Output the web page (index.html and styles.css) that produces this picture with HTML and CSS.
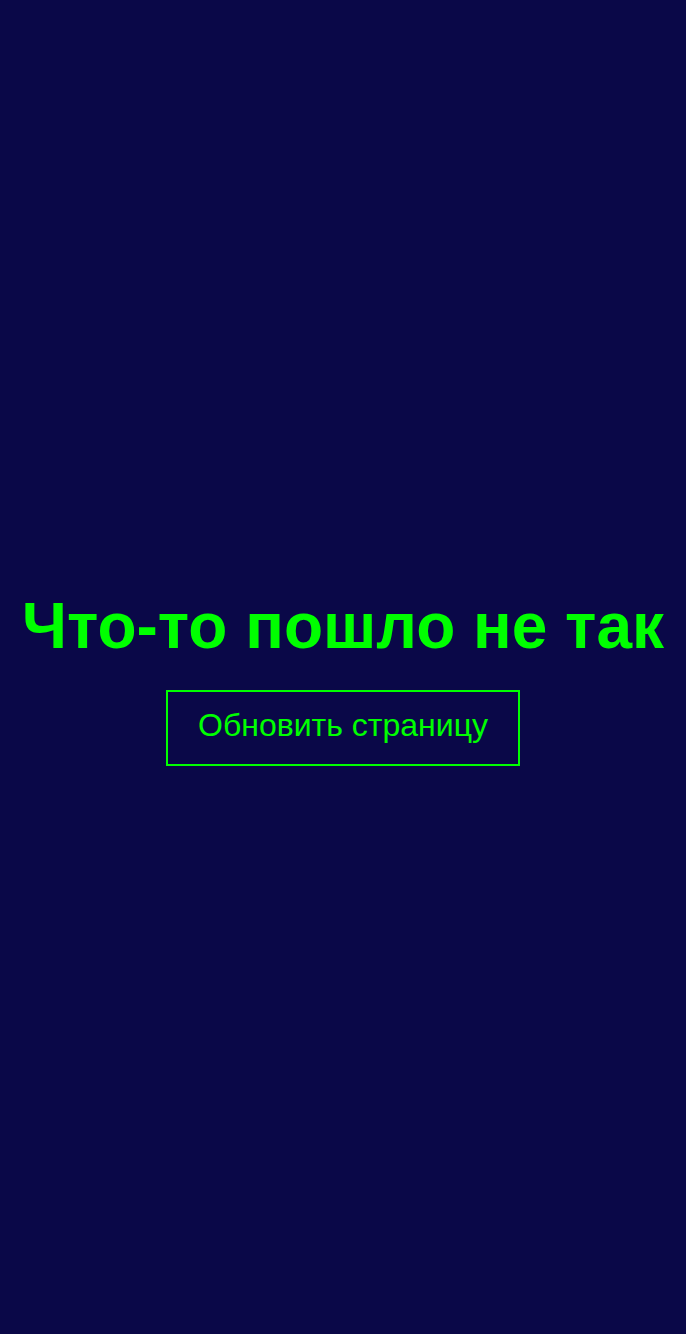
FILE: index.html
```html
<!DOCTYPE html>
<html lang="ru">
<head>
<meta charset="utf-8">
<link rel="stylesheet" href="styles.css">
</head>
<body>
<main class="error">
  <h1 class="error-title">Что-то пошло не так</h1>
  <button class="error-button" type="button">Обновить страницу</button>
</main>
</body>
</html>
```
FILE: styles.css
```css
html, body {
  margin: 0;
  padding: 0;
  background: #0a0848;
}
body {
  font-family: "Liberation Sans", Arial, sans-serif;
  color: #00ff00;
}
.error {
  box-sizing: border-box;
  min-height: 100vh;
  padding-top: 22px;
  display: flex;
  flex-direction: column;
  align-items: center;
  justify-content: center;
  gap: 26px;
}
.error-title {
  margin: 0;
  font-size: 64px;
  font-weight: bold;
  line-height: 1.15;
  white-space: nowrap;
}
.error-button {
  font-family: inherit;
  font-size: 32px;
  color: #00ff00;
  background: transparent;
  border: 2px solid #00ff00;
  padding: 0 30px 4px;
  height: 76px;
  cursor: pointer;
}
```
